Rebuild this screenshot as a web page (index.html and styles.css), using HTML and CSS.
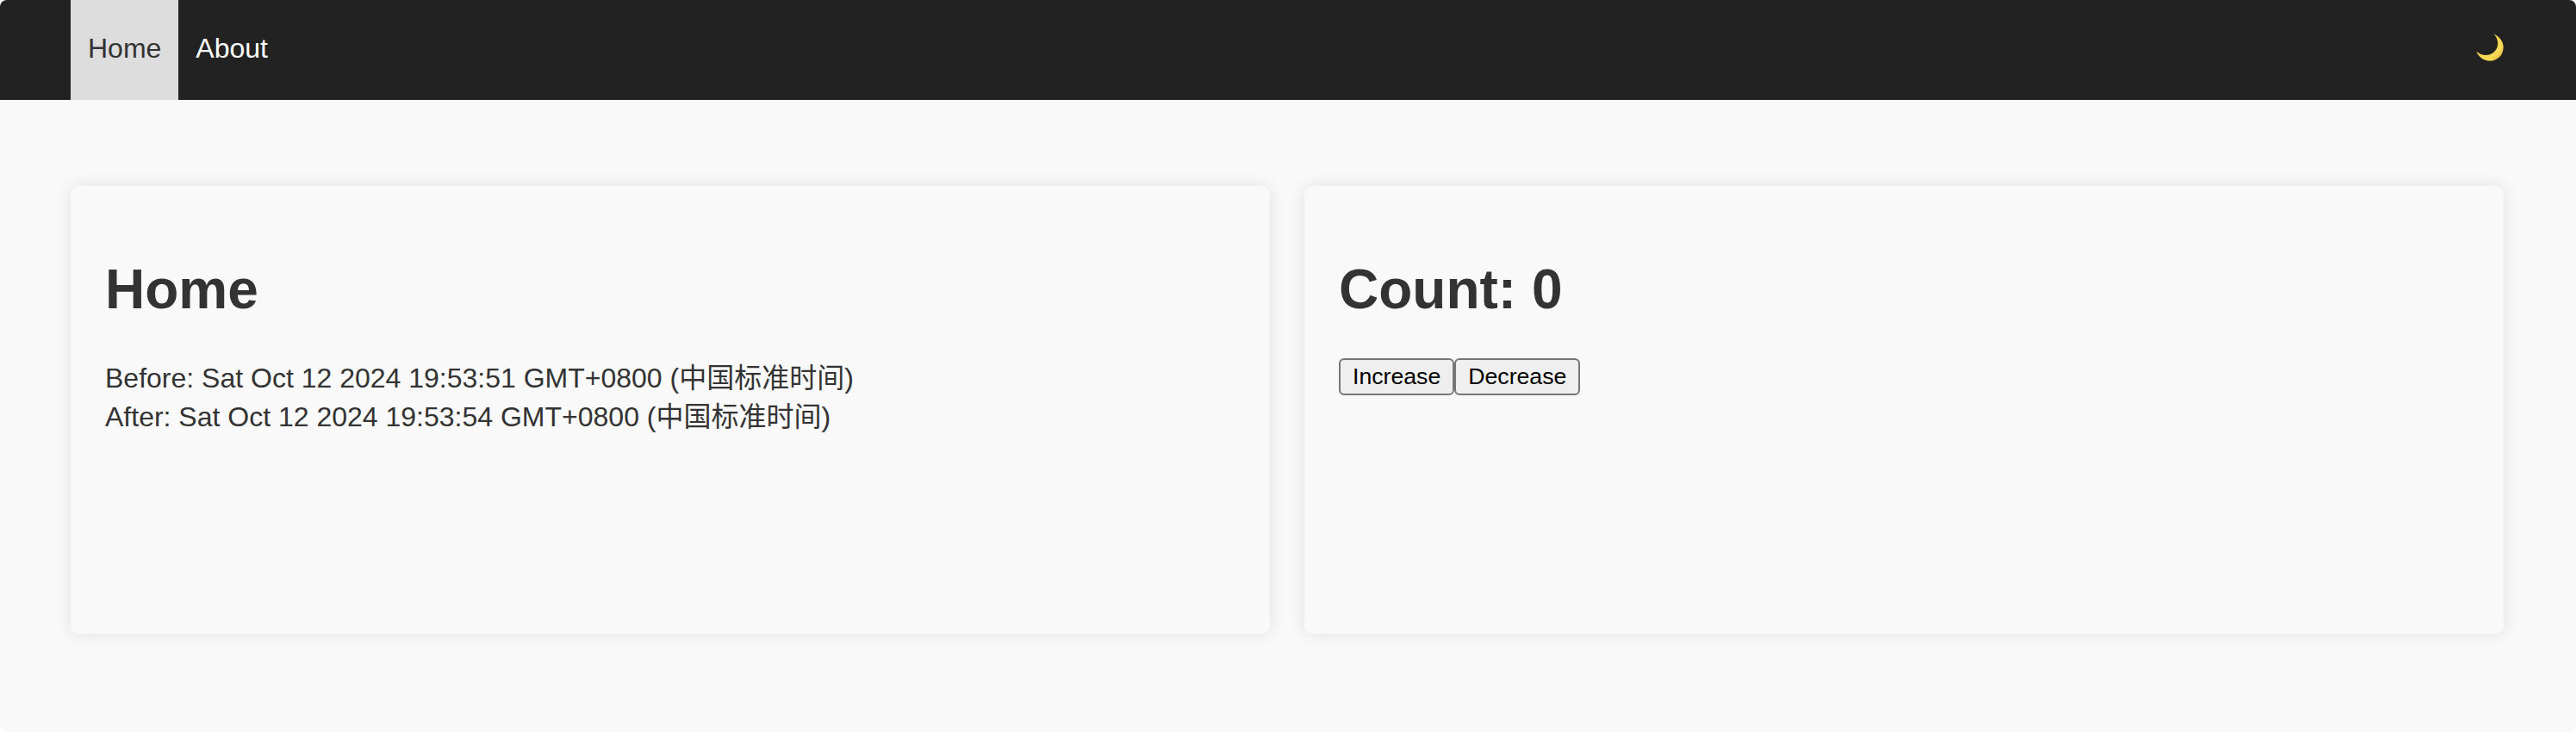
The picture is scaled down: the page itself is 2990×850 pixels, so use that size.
FILE: index.html
```html
<!DOCTYPE html>
<html lang="en">
<head>
<meta charset="utf-8">
<title>Home</title>
<link rel="stylesheet" href="styles.css">
</head>
<body>
<nav class="nav">
  <a class="link active">Home</a>
  <a class="link">About</a>
  <button class="theme" aria-label="Theme">
    <svg class="moon" viewBox="0 0 32 32" width="32" height="32">
      <defs><linearGradient id="gold" x1="0" y1="0" x2="1" y2="1"><stop offset="0.45" stop-color="#f6d450"/><stop offset="0.72" stop-color="#fadb58"/><stop offset="1" stop-color="#dfa22c"/></linearGradient></defs>
      <path d="M20.6 0.4C27.5 3.4 31.7 9.2 31.7 16C31.7 25 24.8 31.7 16 31.7C9 31.7 3 27.5 0.3 20.6C3.8 24 7.2 25 11.4 25C19.2 25 25.3 19.2 25.3 11.6C25.3 7.5 23.8 3.7 20.6 0.4Z" fill="url(#gold)"/>
    </svg>
  </button>
</nav>
<main class="main">
  <section class="card">
    <h1 class="title">Home</h1>
    <div class="lines">
      <div>Before: Sat Oct 12 2024 19:53:51 GMT+0800 (中国标准时间)</div>
      <div>After: Sat Oct 12 2024 19:53:54 GMT+0800 (中国标准时间)</div>
    </div>
  </section>
  <section class="card">
    <h1 class="title">Count: 0</h1>
    <div class="buttons"><button class="btn">Increase</button><button class="btn">Decrease</button></div>
  </section>
</main>
</body>
</html>
```
FILE: styles.css
```css
* { box-sizing: border-box; }
html { background: #fff; }
body { margin: 0; color: #333; font: 32px/45px "Liberation Sans", "Noto Sans CJK SC", sans-serif; }
.nav { display: flex; height: 116px; padding: 0 84px 0 82px; background: #222; border-radius: 8px 8px 0 0; }
.link { padding: 34px 20px; color: #fff; }
.active { background: #ddd; color: #333; }
.theme { display: flex; margin-left: auto; border: 0; padding: 39px 0 0; background: none; }
.main { display: grid; grid-template-columns: 1fr 1fr; gap: 40px; height: 734px; padding: 100px 84px 0 82px; background: #f9f9f9; border-radius: 0 0 8px 8px; }
.card { height: 520px; padding: 40px; border-radius: 10px; box-shadow: 0 0 20px rgba(0,0,0,.1); }
.title { margin: 43px 0; font-size: 64px; line-height: 74px; }
.lines { padding-top: 1px; }
.buttons { display: flex; }
.btn { height: 43px; padding: 2px 14px; border: 2px solid #767676; border-radius: 6px; background: #efefef; color: #000; font: 26.667px "Liberation Sans", sans-serif; }
```
